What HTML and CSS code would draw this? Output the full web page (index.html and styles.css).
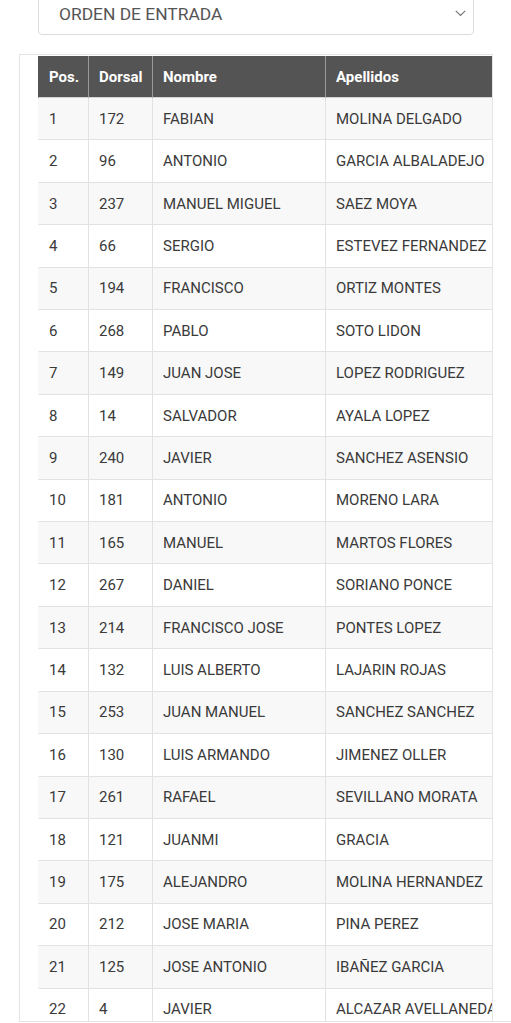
FILE: index.html
```html
<!DOCTYPE html>
<html lang="es">
<head>
<meta charset="utf-8">
<title>Orden de entrada</title>
<link rel="stylesheet" href="styles.css">
</head>
<body>
<div class="select">
  <span class="select-text">ORDEN DE ENTRADA</span>
  <svg class="chevron" width="11" height="7" viewBox="0 0 11 7"><polyline points="0.8,0.8 5.5,5.5 10.2,0.8" fill="none" stroke="#777" stroke-width="1.2"/></svg>
</div>
<div class="panel">
  <table class="grid">
    <colgroup><col class="c-pos"><col class="c-dor"><col class="c-nom"><col class="c-ape"></colgroup>
    <thead>
      <tr><th>Pos.</th><th>Dorsal</th><th>Nombre</th><th>Apellidos</th></tr>
    </thead>
    <tbody>
      <tr><td>1</td><td>172</td><td>FABIAN</td><td>MOLINA DELGADO</td></tr>
      <tr><td>2</td><td>96</td><td>ANTONIO</td><td>GARCIA ALBALADEJO</td></tr>
      <tr><td>3</td><td>237</td><td>MANUEL MIGUEL</td><td>SAEZ MOYA</td></tr>
      <tr><td>4</td><td>66</td><td>SERGIO</td><td>ESTEVEZ FERNANDEZ</td></tr>
      <tr><td>5</td><td>194</td><td>FRANCISCO</td><td>ORTIZ MONTES</td></tr>
      <tr><td>6</td><td>268</td><td>PABLO</td><td>SOTO LIDON</td></tr>
      <tr><td>7</td><td>149</td><td>JUAN JOSE</td><td>LOPEZ RODRIGUEZ</td></tr>
      <tr><td>8</td><td>14</td><td>SALVADOR</td><td>AYALA LOPEZ</td></tr>
      <tr><td>9</td><td>240</td><td>JAVIER</td><td>SANCHEZ ASENSIO</td></tr>
      <tr><td>10</td><td>181</td><td>ANTONIO</td><td>MORENO LARA</td></tr>
      <tr><td>11</td><td>165</td><td>MANUEL</td><td>MARTOS FLORES</td></tr>
      <tr><td>12</td><td>267</td><td>DANIEL</td><td>SORIANO PONCE</td></tr>
      <tr><td>13</td><td>214</td><td>FRANCISCO JOSE</td><td>PONTES LOPEZ</td></tr>
      <tr><td>14</td><td>132</td><td>LUIS ALBERTO</td><td>LAJARIN ROJAS</td></tr>
      <tr><td>15</td><td>253</td><td>JUAN MANUEL</td><td>SANCHEZ SANCHEZ</td></tr>
      <tr><td>16</td><td>130</td><td>LUIS ARMANDO</td><td>JIMENEZ OLLER</td></tr>
      <tr><td>17</td><td>261</td><td>RAFAEL</td><td>SEVILLANO MORATA</td></tr>
      <tr><td>18</td><td>121</td><td>JUANMI</td><td>GRACIA</td></tr>
      <tr><td>19</td><td>175</td><td>ALEJANDRO</td><td>MOLINA HERNANDEZ</td></tr>
      <tr><td>20</td><td>212</td><td>JOSE MARIA</td><td>PINA PEREZ</td></tr>
      <tr><td>21</td><td>125</td><td>JOSE ANTONIO</td><td>IBAÑEZ GARCIA</td></tr>
      <tr><td>22</td><td>4</td><td>JAVIER</td><td>ALCAZAR AVELLANEDA</td></tr>
    </tbody>
  </table>
</div>
<div class="bottom-rule"></div>
</body>
</html>
```
FILE: styles.css
```css
html, body {
  margin: 0;
  padding: 0;
  background: #fff;
  overflow: hidden;
}
body {
  font-family: Roboto, "Liberation Sans", Arial, sans-serif;
  color: #333;
}
.select {
  margin: -8px 0 0 38px;
  width: 436px;
  height: 43px;
  border: 1px solid #dcdcdc;
  border-radius: 4px;
  display: flex;
  align-items: center;
  justify-content: space-between;
  padding: 0 7px 0 20px;
  box-sizing: border-box;
}
.select-text {
  font-size: 17.4px;
  color: #555;
}
.chevron {
  display: block;
  margin-bottom: 1px;
}
.panel {
  margin: 19px 0 0 19px;
  width: 454px;
  height: 965px;
  padding: 1px 0 0 18px;
  box-sizing: content-box;
  border: 1px solid #e4e4e4;
  border-bottom: none;
  overflow: hidden;
}
.bottom-rule {
  margin-left: 19px;
  border-top: 1px solid #e4e4e4;
}
.grid {
  border-collapse: separate;
  border-spacing: 0;
  table-layout: fixed;
  width: 477px;
  font-size: 15px;
}
.c-pos { width: 50px; }
.c-dor { width: 64px; }
.c-nom { width: 173px; }
.c-ape { width: 190px; }
.grid th, .grid td {
  text-align: left;
  white-space: nowrap;
  padding: 0 0 0 10px;
  vertical-align: middle;
  overflow: hidden;
}
.grid th {
  background: #545454;
  color: #fff;
  font-weight: 700;
  height: 41px;
  border-left: 1px solid #9a9a9a;
  border-bottom: 1px solid #d6d6d6;
}
.grid th:first-child { border-left-color: #545454; }
.grid tbody tr { height: 42.42px; }
.grid td {
  border-left: 1px solid #e2e2e2;
  border-bottom: 1px solid #e2e2e2;
  color: #3a3a3a;
}
.grid td:first-child { border-left-color: transparent; }
.grid tbody tr:nth-child(odd) td { background: #f8f8f8; }
```
